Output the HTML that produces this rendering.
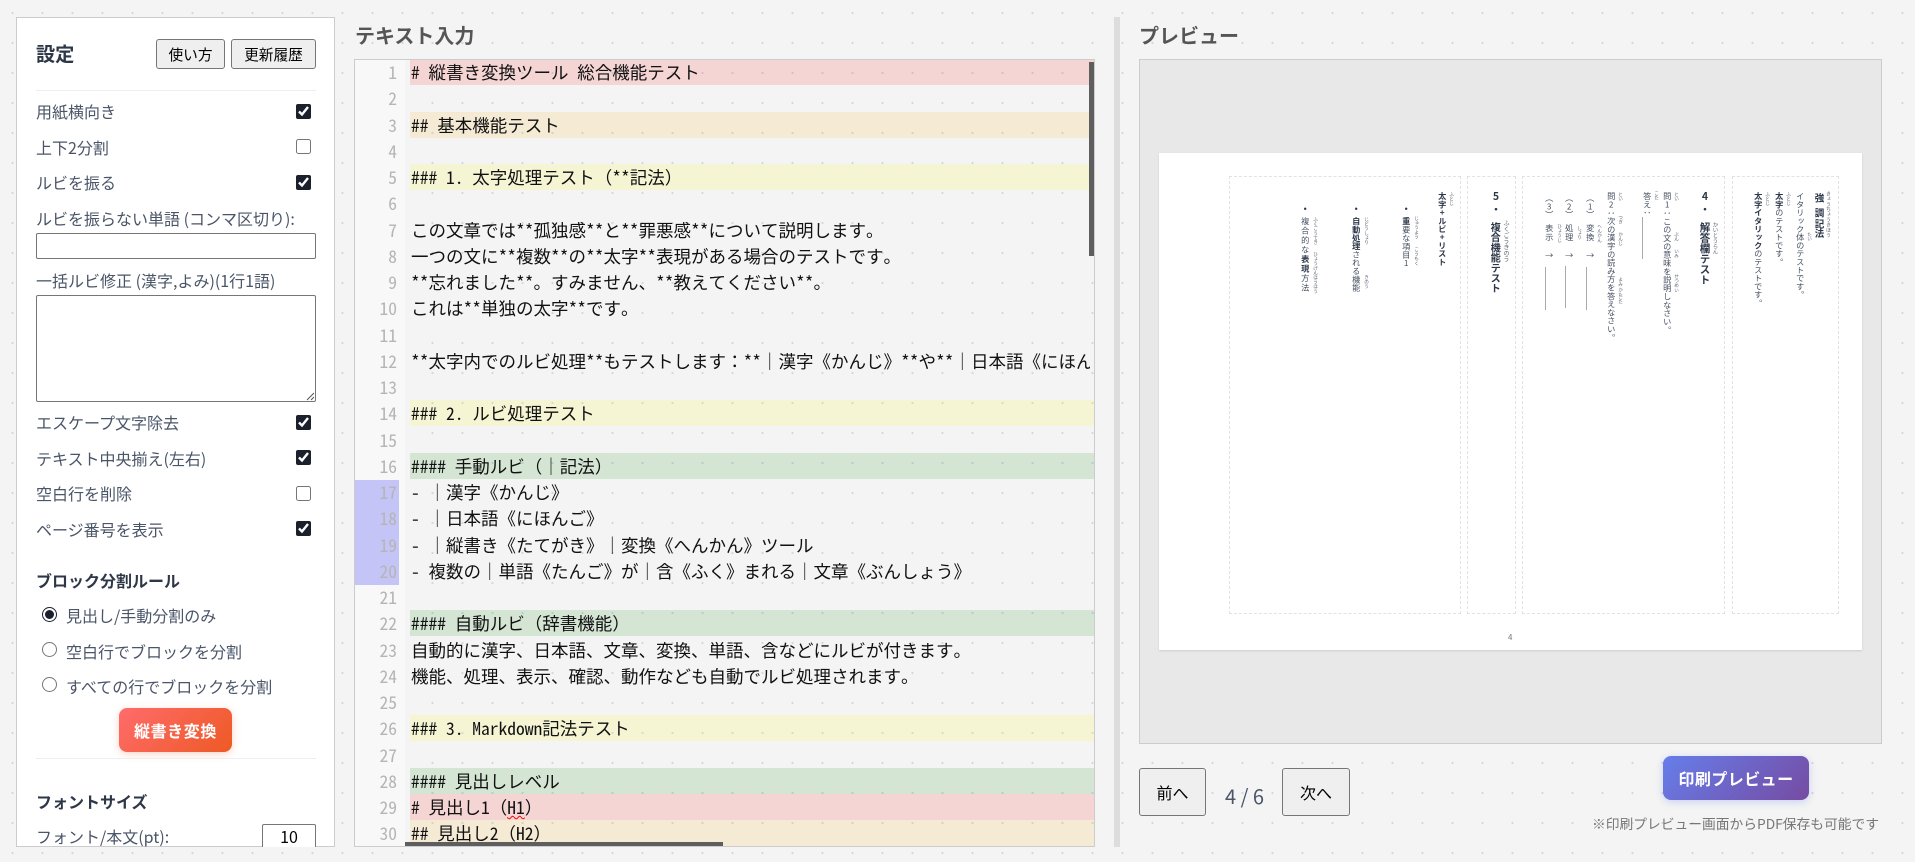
<!DOCTYPE html>
<html lang="ja"><head><meta charset="utf-8"><title>縦書き変換ツール</title>
<style>
*{box-sizing:border-box}
html,body{margin:0;padding:0;width:1915px;height:862px;overflow:hidden}
body{background-color:#f4f4f4;background-image:radial-gradient(circle at 12.5px 13px,#cdd9e6 1px,transparent 1.3px);background-size:30px 30px;font-family:"Noto Sans CJK JP","Liberation Sans",sans-serif;position:relative}
.a{position:absolute}
.t{position:absolute;line-height:24px;white-space:nowrap;font-size:16px;color:#4a5568}
.b{font-weight:700;color:#2d3748}
#side{position:absolute;left:16px;top:17px;width:319px;height:830px;background:#fff;border:1px solid #ccc;overflow:hidden}
.btn{position:absolute;background:#efefef;border:1px solid #767676;border-radius:3px;font-size:14.7px;color:#000;text-align:center;display:flex;align-items:center;justify-content:center}
.hr{position:absolute;height:1px;background:#eee;left:19px;width:280px}
input[type=checkbox],input[type=radio]{position:absolute;margin:0;width:15px;height:15px;accent-color:#1a202c}
.box{position:absolute;background:#fff;border:1px solid #767676;border-radius:2px}
#ed{position:absolute;left:354px;top:59px;width:741px;height:788px;border:1px solid #ccc;overflow:hidden}
#gut{position:absolute;left:0;top:0;width:50px;height:100%;background:#f8f8f8}
.act{position:absolute;left:0;width:44px;background:#c4c4f6}
.l{position:absolute;left:55px;width:686px;height:26.25px;line-height:26.25px;font-family:"Noto Sans Mono CJK JP","Noto Sans CJK JP",monospace;font-size:17.5px;color:#111;white-space:pre;padding-left:1px;overflow:hidden}
.n{position:absolute;left:0;width:42px;text-align:right;height:26.25px;line-height:26.25px;font-family:"Noto Sans Mono CJK JP","Noto Sans CJK JP",monospace;font-size:17.5px;color:#b5b5b5}
.r,.o,.y,.g{background-repeat:no-repeat;background-size:100% 25px}
.r{background-image:linear-gradient(rgba(255,0,0,.13),rgba(255,0,0,.13));box-shadow:0 -1px 0 rgba(255,0,0,.13)}
.o{background-image:linear-gradient(rgba(255,165,0,.13),rgba(255,165,0,.13));box-shadow:0 -1px 0 rgba(255,165,0,.13)}
.y{background-image:linear-gradient(rgba(255,255,0,.13),rgba(255,255,0,.13));box-shadow:0 -1px 0 rgba(255,255,0,.13)}
.g{background-image:linear-gradient(rgba(0,128,0,.13),rgba(0,128,0,.13));box-shadow:0 -1px 0 rgba(0,128,0,.13)}
.h2{position:absolute;top:23px;font-size:20px;font-weight:700;color:#555;line-height:24px;white-space:nowrap}
#pv{position:absolute;left:1139px;top:59px;width:743px;height:685px;background:#e8e8e8;border:1px solid #ccc}
#pg{position:absolute;left:1159px;top:153px;width:703px;height:497px;background:#fff;box-shadow:0 1px 2px rgba(0,0,0,.12)}
.c{position:absolute;top:176px;height:438px;border:1px dashed #e2e2e2}
.v{position:absolute;writing-mode:vertical-rl;text-orientation:upright;white-space:nowrap;line-height:1;font-size:8.2px;color:#465061}
.v b{color:#2d3748}
.u{position:absolute;writing-mode:vertical-rl;text-orientation:upright;white-space:nowrap;line-height:1;font-size:4.6px;color:#5a6270}
.ln{position:absolute;width:1px;background:#aaa}
</style></head><body>

<div id="side"></div>
<div class="t b" style="left:36px;top:41px;font-size:19.2px">設定</div>
<div class="btn" style="left:156px;top:39px;width:69px;height:30px">使い方</div>
<div class="btn" style="left:231px;top:39px;width:85px;height:30px">更新履歴</div>
<div class="hr" style="left:36px;top:90px"></div>

<div class="t" style="left:36px;top:99px">用紙横向き</div><input type="checkbox" checked style="left:296px;top:104px">
<div class="t" style="left:36px;top:135px">上下2分割</div><input type="checkbox" style="left:296px;top:139px">
<div class="t" style="left:36px;top:170px">ルビを振る</div><input type="checkbox" checked style="left:296px;top:175px">
<div class="t" style="left:36px;top:206px">ルビを振らない単語 (コンマ区切り):</div>
<div class="box" style="left:36px;top:233px;width:280px;height:26px"></div>
<div class="t" style="left:36px;top:268px">一括ルビ修正 (漢字,よみ)(1行1語)</div>
<div class="box" style="left:36px;top:295px;width:280px;height:107px"></div>
<svg class="a" style="left:306px;top:392px" width="9" height="9"><path d="M1 8L8 1M5 8L8 5" stroke="#555" stroke-width="1" fill="none"/></svg>
<div class="t" style="left:36px;top:410px">エスケープ文字除去</div><input type="checkbox" checked style="left:296px;top:415px">
<div class="t" style="left:36px;top:446px">テキスト中央揃え(左右)</div><input type="checkbox" checked style="left:296px;top:450px">
<div class="t" style="left:36px;top:481px">空白行を削除</div><input type="checkbox" style="left:296px;top:486px">
<div class="t" style="left:36px;top:517px">ページ番号を表示</div><input type="checkbox" checked style="left:296px;top:521px">
<div class="t b" style="left:36px;top:568px">ブロック分割ルール</div>
<input type="radio" checked style="left:42px;top:607px"><div class="t" style="left:66px;top:603px">見出し/手動分割のみ</div>
<input type="radio" style="left:42px;top:642px"><div class="t" style="left:66px;top:639px">空白行でブロックを分割</div>
<input type="radio" style="left:42px;top:677px"><div class="t" style="left:66px;top:674px">すべての行でブロックを分割</div>
<div class="a" style="left:119px;top:708px;width:113px;height:44px;border-radius:8px;background:linear-gradient(135deg,#ff6b6b,#ee5a24);box-shadow:0 2px 8px rgba(238,90,36,.25);color:#fff;font-weight:700;font-size:16px;letter-spacing:.6px;display:flex;align-items:center;justify-content:center">縦書き変換</div>
<div class="hr" style="left:36px;top:758px"></div>
<div class="t b" style="left:36px;top:789px">フォントサイズ</div>
<div class="a" style="left:16px;top:800px;width:319px;height:47px;overflow:hidden">
 <div class="t" style="left:20px;top:24px">フォント/本文(pt):</div>
 <div class="box" style="left:246px;top:24px;width:54px;height:30px;color:#000;font-size:16px;text-align:center;line-height:23px">10</div>
</div>

<div class="h2" style="left:355px">テキスト入力</div>
<div id="ed">
 <div id="gut"></div>
 <div class="act" style="top:420px;height:105px"></div>
 <div class="n" style="top:0">1</div><div class="n" style="top:26.25px">2</div><div class="n" style="top:52.5px">3</div><div class="n" style="top:78.75px">4</div><div class="n" style="top:105px">5</div><div class="n" style="top:131.25px">6</div><div class="n" style="top:157.5px">7</div><div class="n" style="top:183.75px">8</div><div class="n" style="top:210px">9</div><div class="n" style="top:236.25px">10</div><div class="n" style="top:262.5px">11</div><div class="n" style="top:288.75px">12</div><div class="n" style="top:315px">13</div><div class="n" style="top:341.25px">14</div><div class="n" style="top:367.5px">15</div><div class="n" style="top:393.75px">16</div><div class="n" style="top:420px">17</div><div class="n" style="top:446.25px">18</div><div class="n" style="top:472.5px">19</div><div class="n" style="top:498.75px">20</div><div class="n" style="top:525px">21</div><div class="n" style="top:551.25px">22</div><div class="n" style="top:577.5px">23</div><div class="n" style="top:603.75px">24</div><div class="n" style="top:630px">25</div><div class="n" style="top:656.25px">26</div><div class="n" style="top:682.5px">27</div><div class="n" style="top:708.75px">28</div><div class="n" style="top:735px">29</div><div class="n" style="top:761.25px">30</div>
 <div class="l r" style="top:0;height:25px"># 縦書き変換ツール 総合機能テスト</div>
 <div class="l o" style="top:52.5px">## 基本機能テスト</div>
 <div class="l y" style="top:105px">### 1. 太字処理テスト（**記法）</div>
 <div class="l" style="top:157.5px">この文章では**孤独感**と**罪悪感**について説明します。</div>
 <div class="l" style="top:183.75px">一つの文に**複数**の**太字**表現がある場合のテストです。</div>
 <div class="l" style="top:210px">**忘れました**。すみません、**教えてください**。</div>
 <div class="l" style="top:236.25px">これは**単独の太字**です。</div>
 <div class="l" style="top:288.75px;width:680px">**太字内でのルビ処理**もテストします：**｜漢字《かんじ》**や**｜日本語《にほんご》**</div>
 <div class="l y" style="top:341.25px">### 2. ルビ処理テスト</div>
 <div class="l g" style="top:393.75px">#### 手動ルビ（｜記法）</div>
 <div class="l" style="top:420px">- ｜漢字《かんじ》</div>
 <div class="l" style="top:446.25px">- ｜日本語《にほんご》</div>
 <div class="l" style="top:472.5px">- ｜縦書き《たてがき》｜変換《へんかん》ツール</div>
 <div class="l" style="top:498.75px">- 複数の｜単語《たんご》が｜含《ふく》まれる｜文章《ぶんしょう》</div>
 <div class="l g" style="top:551.25px">#### 自動ルビ（辞書機能）</div>
 <div class="l" style="top:577.5px">自動的に漢字、日本語、文章、変換、単語、含などにルビが付きます。</div>
 <div class="l" style="top:603.75px">機能、処理、表示、確認、動作なども自動でルビ処理されます。</div>
 <div class="l y" style="top:656.25px">### 3. Markdown記法テスト</div>
 <div class="l g" style="top:708.75px">#### 見出しレベル</div>
 <div class="l r" style="top:735px"># 見出し1（<span style="text-decoration:underline wavy #f00 1px">H1</span>）</div>
 <div class="l o" style="top:761.25px">## 見出し2（<span style="text-decoration:underline wavy #f00 1px">H2</span>）</div>
 <div class="a" style="left:734px;top:2px;width:5px;height:194px;background:#5e5e5e"></div>
 <div class="a" style="left:50px;top:782px;width:318px;height:5px;background:#5e5e5e"></div>
</div>

<div class="a" style="left:1114px;top:17px;width:6px;height:830px;background:#ddd"></div>
<div class="h2" style="left:1139px">プレビュー</div>
<div id="pv"></div>
<div id="pg"></div>
<div class="c" style="left:1229px;width:232px"></div>
<div class="c" style="left:1467px;width:49px"></div>
<div class="c" style="left:1522px;width:203px"></div>
<div class="c" style="left:1732px;width:107px"></div>

<!-- box D -->
<div class="v" style="left:1814px;top:193px;font-size:9.5px"><b>強</b></div>
<div class="v" style="left:1814px;top:208px;font-size:9.5px"><b>調</b></div>
<div class="v" style="left:1814px;top:219px;font-size:9.5px"><b>記法</b></div>
<div class="u" style="left:1826px;top:191px;font-size:5px;letter-spacing:.2px">きょうちょうきほう</div>
<div class="v" style="left:1796px;top:192px">イタリック体のテストです。</div>
<div class="u" style="left:1807px;top:232px">たい</div>
<div class="v" style="left:1775px;top:192px"><b>太字</b>のテストです。</div>
<div class="u" style="left:1786px;top:192px">ふとじ</div>
<div class="v" style="left:1754px;top:192px"><b>太字イタリック</b>のテストです。</div>
<div class="u" style="left:1765px;top:192px">ふとじ</div>

<!-- box C -->
<div class="v" style="left:1699px;top:191px;font-size:10.5px;color:#2d3748"><b>4</b></div>
<div class="v" style="left:1699px;top:204px;font-size:10.5px;color:#2d3748"><b>・</b></div>
<div class="v" style="left:1699px;top:222px;font-size:10.5px"><b>解答欄テスト</b></div>
<div class="u" style="left:1712px;top:222px;font-size:5.4px">かいとうらん</div>
<div class="v" style="left:1663px;top:192px;letter-spacing:.15px">問1：この文の意味を説明しなさい。</div>
<div class="u" style="left:1674px;top:192px">とい</div>
<div class="u" style="left:1674px;top:232px">ぶん</div>
<div class="u" style="left:1674px;top:249px">いみ</div>
<div class="u" style="left:1674px;top:274px">せつめい</div>
<div class="v" style="left:1643px;top:192px">答え：</div>
<div class="u" style="left:1654px;top:191px">こた</div>
<div class="ln" style="left:1642px;top:217px;height:42px"></div>
<div class="v" style="left:1607px;top:192px;letter-spacing:.1px">問2：次の漢字の読み方を答えなさい。</div>
<div class="u" style="left:1618px;top:192px">とい</div>
<div class="u" style="left:1618px;top:215px">つぎ</div>
<div class="u" style="left:1618px;top:232px">かんじ</div>
<div class="u" style="left:1618px;top:277px;letter-spacing:.6px">よみかた</div>
<div class="u" style="left:1618px;top:295px">こた</div>

<div class="v" style="left:1586px;top:194px">（1）</div>
<div class="v" style="left:1586px;top:224px;letter-spacing:.6px">変換</div>
<div class="u" style="left:1597px;top:224px">へんかん</div>
<div class="v" style="left:1586px;top:251px">→</div>
<div class="ln" style="left:1586px;top:267px;height:43px"></div>

<div class="v" style="left:1565px;top:194px">（2）</div>
<div class="v" style="left:1565px;top:224px;letter-spacing:.6px">処理</div>
<div class="u" style="left:1577px;top:226px">しょり</div>
<div class="v" style="left:1565px;top:251px">→</div>
<div class="ln" style="left:1565px;top:266px;height:42px"></div>

<div class="v" style="left:1545px;top:194px">（3）</div>
<div class="v" style="left:1545px;top:224px;letter-spacing:.6px">表示</div>
<div class="u" style="left:1557px;top:224px">ひょうじ</div>
<div class="v" style="left:1545px;top:251px">→</div>
<div class="ln" style="left:1545px;top:267px;height:43px"></div>

<!-- box B -->
<div class="v" style="left:1490px;top:191px;font-size:10.5px;color:#2d3748"><b>5</b></div>
<div class="v" style="left:1490px;top:204px;font-size:10.5px;color:#2d3748"><b>・</b></div>
<div class="v" style="left:1490px;top:222px;font-size:10.2px"><b>複合機能テスト</b></div>
<div class="u" style="left:1503px;top:220px;font-size:6px">ふくごうきのう</div>

<!-- box A -->
<div class="v" style="left:1438px;top:192px;font-size:8.2px"><b>太字+ルビ+リスト</b></div>
<div class="u" style="left:1449px;top:192px">ふとじ</div>
<div class="v" style="left:1402px;top:204px"><b>•</b></div>
<div class="v" style="left:1402px;top:217px;letter-spacing:.2px"><b>重</b>要な項目1</div>
<div class="u" style="left:1414px;top:216px">じゅうよう</div>
<div class="u" style="left:1414px;top:247px">こうもく</div>
<div class="v" style="left:1352px;top:204px"><b>•</b></div>
<div class="v" style="left:1352px;top:217px;letter-spacing:.1px"><b>自動処理</b>される機能</div>
<div class="u" style="left:1364px;top:217px">じどうしょり</div>
<div class="u" style="left:1364px;top:275px">きのう</div>
<div class="v" style="left:1301px;top:204px"><b>•</b></div>
<div class="v" style="left:1301px;top:217px;letter-spacing:1.3px">複合的な<b>表現</b>方法</div>
<div class="u" style="left:1313px;top:217px">ふくごうてき</div>
<div class="u" style="left:1313px;top:252px">ひょうげんほうほう</div>

<div class="a" style="left:1508px;top:633px;font-size:8px;line-height:10px;color:#777">4</div>

<div class="btn" style="left:1139px;top:768px;width:67px;height:48px;font-size:16px">前へ</div>
<div class="t" style="left:1225px;top:784px;font-size:20px">4 / 6</div>
<div class="btn" style="left:1282px;top:768px;width:68px;height:48px;font-size:16px">次へ</div>
<div class="a" style="left:1663px;top:756px;width:146px;height:44px;border-radius:8px;background:linear-gradient(135deg,#667eea,#764ba2);box-shadow:0 2px 8px rgba(102,126,234,.3);color:#fff;font-weight:700;font-size:16px;letter-spacing:.45px;display:flex;align-items:center;justify-content:center">印刷プレビュー</div>
<div class="t" style="left:1592px;top:811px;font-size:13.75px;color:#777">※印刷プレビュー画面からPDF保存も可能です</div>
</body></html>
